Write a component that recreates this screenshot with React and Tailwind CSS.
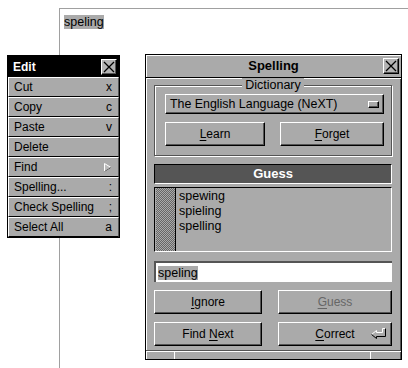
const font = { fontFamily: '"Liberation Sans", Arial, sans-serif' };

const raised =
  'border border-t-white border-l-white border-b-black border-r-black shadow-[inset_-1px_-1px_0_#555]';

function CloseBox() {
  return (
    <div className="w-[16px] h-[16px] bg-[#b4b4b4] border border-t-white border-l-white border-b-black border-r-black shadow-[inset_-1px_-1px_0_#555] flex items-center justify-center">
      <svg width="12" height="12" viewBox="0 0 12 12">
        <path d="M1 1 L11 11 M11 1 L1 11" stroke="#000" strokeWidth="1.3" fill="none" />
      </svg>
    </div>
  );
}

function Mn({ children }) {
  return <span className="underline underline-offset-2">{children}</span>;
}

const menuItems = [
  ['Cut', 'x'],
  ['Copy', 'c'],
  ['Paste', 'v'],
  ['Delete', ''],
  ['Find', 'arrow'],
  ['Spelling...', ':'],
  ['Check Spelling', ';'],
  ['Select All', 'a'],
];

function EditMenu() {
  return (
    <div className="absolute left-[7px] top-[55px] w-[113px] border border-black bg-[#aaa] text-[12px]">
      <div className="h-[21px] bg-black flex items-center justify-between pl-[5px] pr-[2px]">
        <span className="text-white font-bold">Edit</span>
        <CloseBox />
      </div>
      {menuItems.map(([label, key]) => (
        <div
          key={label}
          className="h-[20px] flex items-center justify-between pl-[5px] pr-[6px] border-t border-l border-t-white border-l-white border-r border-r-[#555] border-b border-b-black"
        >
          <span>{label}</span>
          {key === 'arrow' ? (
            <svg width="8" height="9" viewBox="0 0 8 9">
              <path d="M0.5 0.5 L7 4.5 L0.5 8.5 Z" fill="#bbb" stroke="#fff" strokeWidth="1" />
              <path d="M0.5 8.5 L7 4.5" stroke="#555" strokeWidth="1" />
            </svg>
          ) : (
            <span>{key}</span>
          )}
        </div>
      ))}
    </div>
  );
}

function Button({ children, className, disabled }) {
  return (
    <div
      className={`h-[24px] flex items-center justify-center bg-[#aaa] ${raised} ${disabled ? 'text-[#666]' : 'text-black'} ${className}`}
    >
      {children}
    </div>
  );
}

function ReturnIcon() {
  return (
    <svg className="absolute right-[3px] top-[4px]" width="18" height="13" viewBox="0 0 18 13">
      <path d="M1.5 7.5 L6.5 3.5 L6.5 5.5 L12.5 5.5 L12.5 1.5 L15.5 1.5 L15.5 9.5 L6.5 9.5 L6.5 11.5 Z" fill="#aaa" />
      <path d="M1.5 7.5 L6.5 3.5 L6.5 5.5 L12.5 5.5 L12.5 1.5 L15.5 1.5" fill="none" stroke="#fff" strokeWidth="1" />
      <path d="M15.5 1.5 L15.5 9.5 L6.5 9.5 L6.5 11.5 L1.5 7.5" fill="none" stroke="#000" strokeWidth="1" />
    </svg>
  );
}

function SpellingPanel() {
  return (
    <div className="absolute left-[145px] top-[54px] w-[257px] h-[306px] border border-black bg-[#aaa] flex flex-col text-[12px]">
      <div className="h-[23px] shrink-0 border-b border-black flex items-center justify-center relative shadow-[inset_1px_1px_0_#fff]">
        <span className="font-bold text-[13px]">Spelling</span>
        <div className="absolute right-[2px] top-[3px]">
          <CloseBox />
        </div>
      </div>

      <div className="flex-1 flex flex-col shadow-[inset_1px_1px_0_#fff,inset_-1px_0_0_#555]">
        <div className="relative ml-[8px] mt-[7px] w-[238px] border border-[#555] shadow-[inset_1px_1px_0_#fff,1px_1px_0_#fff] pt-[8px] pb-[9px] pl-[10px]">
          <div className="absolute -top-[8px] left-0 right-0 flex justify-center">
            <span className="bg-[#aaa] px-[3px] leading-[14px] text-[12.5px]">Dictionary</span>
          </div>
          <div className={`w-[219px] h-[20px] flex items-center justify-between pl-[4px] pr-[4px] ${raised}`}>
            <span className="text-[12.4px]">The English Language (NeXT)</span>
            <div className="w-[11px] h-[7px] bg-[#aaa] border border-t-white border-l-white border-b-black border-r-black shadow-[inset_-1px_-1px_0_#555]" />
          </div>
          <div className="flex gap-[15px] mt-[8px]">
            <Button className="w-[100px]">
              <Mn>L</Mn>earn
            </Button>
            <Button className="w-[104px]">
              <Mn>F</Mn>orget
            </Button>
          </div>
        </div>

        <div className="ml-[8px] mt-[8px] w-[238px] h-[20px] bg-[#555] border border-t-black border-l-black border-b-white border-r-white flex items-center justify-center">
          <span className="text-white font-bold text-[13px]">Guess</span>
        </div>

        <div className="ml-[8px] mt-[3px] w-[238px] h-[65px] border border-t-black border-l-black border-b-white border-r-white flex">
          <div className="w-[20px] ml-[1px] border-r border-black bg-[repeating-conic-gradient(#666_0_25%,#aaa_0_50%)] bg-[length:2px_2px]" />
          <div className="pl-[3px] pt-[1px] flex flex-col leading-[15px] text-[12.5px]">
            <span>spewing</span>
            <span>spieling</span>
            <span>spelling</span>
          </div>
        </div>

        <div className="ml-[8px] mt-[9px] w-[238px] h-[21px] bg-white border-t-2 border-l-2 border-t-[#555] border-l-[#555] flex items-center pl-[2px]">
          <span className="bg-[#aaa] leading-[14px] text-[12.5px]">speling</span>
        </div>

        <div className="ml-[8px] mt-[8px] w-[238px] flex justify-between">
          <Button className="w-[108px]">
            <Mn>I</Mn>gnore
          </Button>
          <Button className="w-[114px]" disabled>
            <Mn>G</Mn>uess
          </Button>
        </div>
        <div className="ml-[8px] mt-[8px] w-[238px] flex justify-between">
          <Button className="w-[108px]">
            Find&nbsp;<Mn>N</Mn>ext
          </Button>
          <Button className="w-[114px] relative">
            <Mn>C</Mn>orrect
            <ReturnIcon />
          </Button>
        </div>

        <div className="mt-auto h-[9px] border-t border-t-[#555] flex shadow-[inset_0_1px_0_#fff]">
          <div className="w-[29px] border-r border-r-white" />
          <div className="w-[196px] border-r border-r-white" />
          <div className="flex-1" />
        </div>
      </div>
    </div>
  );
}

export default function App() {
  return (
    <div className="relative w-[408px] h-[368px] bg-white overflow-hidden text-black" style={font}>
      <div className="absolute left-[59px] top-[8px] right-0 bottom-0 border-t border-l border-[#a0a0a0] pl-[4px]">
        <span className="bg-[#aaa] text-[12.5px] leading-[15px]">speling</span>
      </div>
      <EditMenu />
      <SpellingPanel />
    </div>
  );
}
